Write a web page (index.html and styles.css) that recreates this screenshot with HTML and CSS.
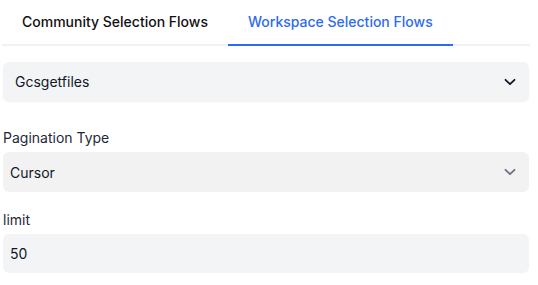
FILE: index.html
```html
<!DOCTYPE html>
<html lang="en">
<head>
  <meta charset="UTF-8" />
  <title>Selection Flows</title>
  <link rel="stylesheet" href="styles.css">
</head>
<body>
  <div class="panel">
    <nav class="tabs">
      <a href="#" class="tab">Community Selection Flows</a>
      <a href="#" class="tab active">Workspace Selection Flows</a>
    </nav>

    <div class="flow-picker">
      <span>Gcsgetfiles</span>
      <svg width="12" height="8" viewBox="0 0 12 8"><path d="M1.5 1.8 6 6.2 10.5 1.8" fill="none" stroke="#111827" stroke-width="1.8" stroke-linecap="round" stroke-linejoin="round"/></svg>
    </div>

    <div class="field">
      <label>Pagination Type</label>
      <div class="select">
        <span>Cursor</span>
        <svg width="12" height="8" viewBox="0 0 12 8"><path d="M1.5 1.8 6 6.2 10.5 1.8" fill="none" stroke="#6b7280" stroke-width="1.8" stroke-linecap="round" stroke-linejoin="round"/></svg>
      </div>
    </div>

    <div class="field">
      <label>limit</label>
      <div class="input">50</div>
    </div>
  </div>
</body>
</html>
```

FILE: styles.css
```css
* { box-sizing: border-box; }
body {
  margin: 0;
  font-family: 'Inter', sans-serif;
  background: #fff;
  color: #111827;
}
.panel {
  padding: 0 9px 0 3px;
}
.tabs {
  display: flex;
  margin: 0 -1px;
  border-bottom: 2px solid #f0f1f3;
}
.tab {
  padding: 13px 20px 14px;
  font-size: 14px;
  font-weight: 500;
  color: #111;
  text-decoration: none;
  margin-bottom: -2px;
  border-bottom: 2px solid transparent;
}
.tab.active {
  color: #2f6bf0;
  border-bottom-color: #2f6bf0;
}
.flow-picker {
  margin-top: 16px;
  height: 39px;
  background: #f3f4f6;
  border-radius: 6px;
  box-shadow: 0 1px 2px rgba(0,0,0,0.06);
  display: flex;
  align-items: center;
  justify-content: space-between;
  padding: 0 13px 0 12px;
  font-size: 14px;
}
.field {
  margin-top: 28px;
}
.field + .field {
  margin-top: 19px;
}
.field label {
  display: block;
  font-size: 14px;
  color: #1f2937;
  margin-bottom: 6px;
}
.select,
.input {
  height: 40px;
  border-radius: 6px;
  display: flex;
  align-items: center;
  padding: 0 13px 0 7px;
  font-size: 14px;
}
.select {
  background: #f2f2f2;
  justify-content: space-between;
}
.input {
  background: #f3f4f6;
  height: 39px;
}
```
